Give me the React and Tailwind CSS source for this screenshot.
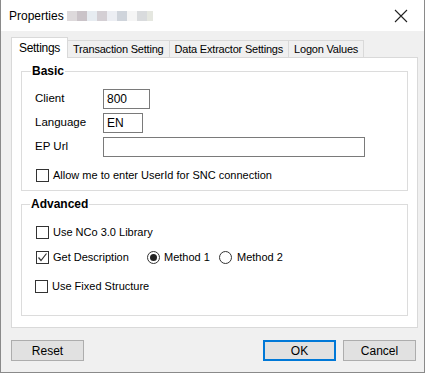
import React from 'react';

const Check = ({ checked }) => (
  <span className="w-[13px] h-[13px] border border-[#333] bg-white flex items-center justify-center shrink-0">
    {checked && (
      <svg width="11" height="11" viewBox="0 0 11 11">
        <path d="M1.5 5.5 L4 8.5 L9.5 1.5" fill="none" stroke="#333" strokeWidth="1.2" />
      </svg>
    )}
  </span>
);

const Radio = ({ checked }) => (
  <span className="w-[13px] h-[13px] rounded-full border border-[#333] bg-white flex items-center justify-center shrink-0">
    {checked && <span className="w-[7px] h-[7px] rounded-full bg-[#222]" />}
  </span>
);

const Field = ({ label, width, value, top }) => (
  <div className={`flex items-center h-[20px] ${top}`}>
    <span className="w-[68px] text-[11.5px]">{label}</span>
    <div className={`h-[20px] border border-[#7a7a7a] bg-white px-[3px] leading-[18px] text-[12px] ${width}`}>{value}</div>
  </div>
);

export default function App() {
  const tabs = ['Transaction Setting', 'Data Extractor Settings', 'Logon Values'];

  return (
    <div className="w-[425px] h-[373px] bg-[#f0f0f0] border-l border-r border-b border-[#8a8a8a] flex flex-col text-[11px] text-black font-['Liberation_Sans',Arial,sans-serif]">
      {/* Title bar */}
      <div className="h-[31px] bg-white flex items-center pl-[8px] pr-[16px] shrink-0 text-[12px]">
        <span>Properties</span>
        <div className="flex ml-[3px] h-[10px] opacity-60">
          <span className="w-[10px] bg-[#c8c0c4]" />
          <span className="w-[10px] bg-[#a89ca4]" />
          <span className="w-[10px] bg-[#d8e0e8]" />
          <span className="w-[10px] bg-[#b8b0b8]" />
          <span className="w-[10px] bg-[#e0e4ec]" />
          <span className="w-[10px] bg-[#b0b8c4]" />
          <span className="w-[10px] bg-[#f0f0f0]" />
          <span className="w-[10px] bg-[#c0c4c8]" />
          <span className="w-[6px] bg-[#d4d8cc]" />
        </div>
        <svg className="ml-auto" width="14" height="14" viewBox="0 0 14 14">
          <path d="M1 1 L13 13 M13 1 L1 13" stroke="#222" strokeWidth="1.1" />
        </svg>
      </div>

      {/* Body */}
      <div className="flex flex-col pl-[9px] pr-[8px] pt-[7px]">
        <div className="flex items-end h-[20px] ml-[1px]">
          <div className="h-[21px] px-[7px] bg-white border border-b-0 border-[#d9d9d9] flex items-center relative z-10 text-[12px] tracking-[-0.3px]">Settings</div>
          {tabs.map(t => (
            <div key={t} className="h-[18px] px-[5px] bg-[#f0f0f0] border border-l-0 border-[#d9d9d9] flex items-center tracking-[-0.2px] text-[11px]">{t}</div>
          ))}
        </div>

        <div className="w-[407px] h-[271px] bg-white border border-[#d9d9d9] -mt-px ml-[1px] px-[9px] pt-[13px]">
          {/* Basic */}
          <div className="h-[120px] border border-[#dcdcdc] flex flex-col pl-[13px]">
            <span className="font-bold text-[12px] bg-white px-[1px] -ml-[4px] -mt-[8px] w-fit leading-[14px]">Basic</span>
            <Field label="Client" width="w-[47px]" value="800" top="mt-[11px]" />
            <Field label="Language" width="w-[40px]" value="EN" top="mt-[4px]" />
            <Field label="EP Url" width="w-[262px]" value="" top="mt-[4px]" />
            <label className="flex items-center gap-[4px] mt-[11px] ml-[1px] h-[14px]">
              <Check />
              <span>Allow me to enter UserId for SNC connection</span>
            </label>
          </div>

          {/* Advanced */}
          <div className="h-[112px] mt-[13px] border border-[#dcdcdc] flex flex-col pl-[14px]">
            <span className="font-bold text-[12px] bg-white px-[1px] -ml-[6px] -mt-[8px] w-fit leading-[14px]">Advanced</span>
            <label className="flex items-center gap-[4px] mt-[14px] h-[14px]">
              <Check />
              <span>Use NCo 3.0 Library</span>
            </label>
            <div className="flex items-center mt-[11px] h-[14px]">
              <label className="flex items-center gap-[4px] w-[111px]">
                <Check checked />
                <span>Get Description</span>
              </label>
              <label className="flex items-center gap-[4px] w-[72px]">
                <Radio checked />
                <span>Method 1</span>
              </label>
              <label className="flex items-center gap-[5px]">
                <Radio />
                <span>Method 2</span>
              </label>
            </div>
            <label className="flex items-center gap-[4px] mt-[15px] -ml-[1px] h-[14px]">
              <Check />
              <span>Use Fixed Structure</span>
            </label>
          </div>
        </div>

        {/* Buttons */}
        <div className="flex mt-[12px] ml-[1px] text-[12px]">
          <button className="w-[73px] h-[21px] bg-[#e1e1e1] border border-[#adadad]">Reset</button>
          <button className="w-[73px] h-[21px] bg-[#e1e1e1] border-2 border-[#0078d7] ml-auto">OK</button>
          <button className="w-[73px] h-[21px] bg-[#e1e1e1] border border-[#adadad] ml-[7px]">Cancel</button>
        </div>
      </div>
    </div>
  );
}
